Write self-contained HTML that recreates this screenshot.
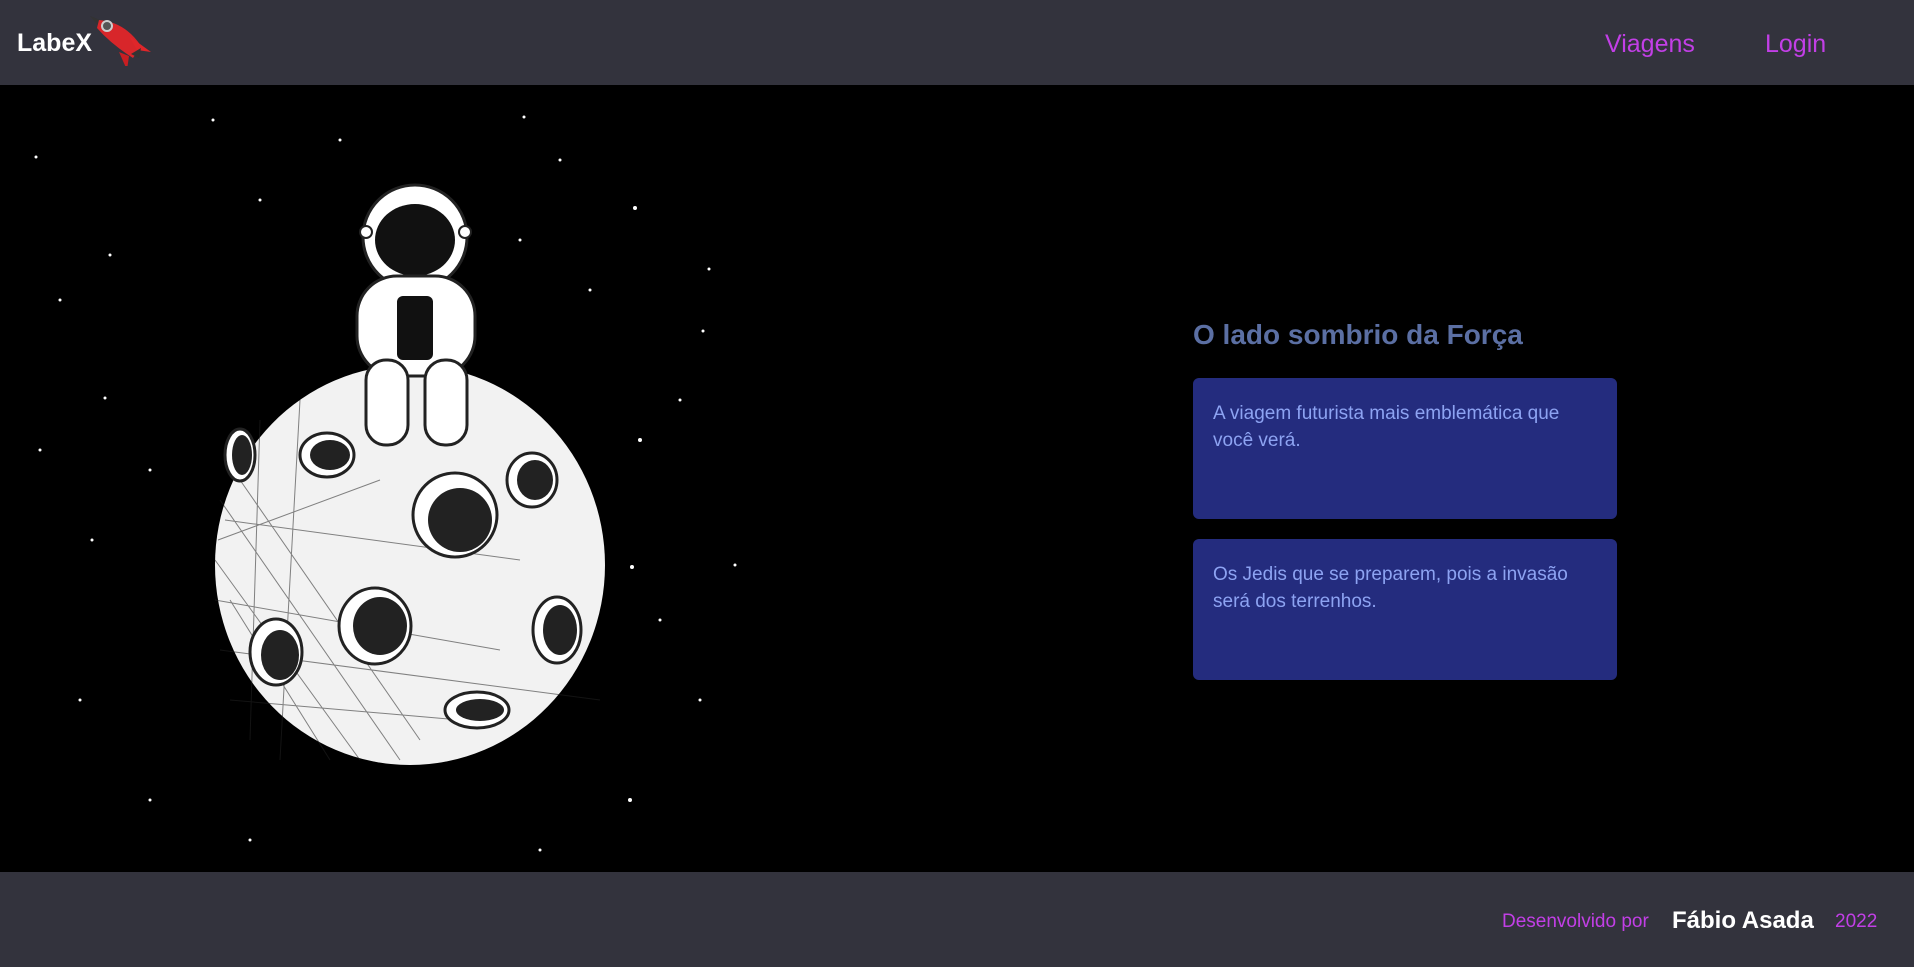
<!DOCTYPE html>
<html><head><meta charset="utf-8"><style>
*{margin:0;padding:0;box-sizing:border-box}
body{width:1914px;height:967px;background:#000;font-family:"Liberation Sans",sans-serif;position:relative;overflow:hidden}
header{position:absolute;left:0;top:0;width:1914px;height:85px;background:#33333d}
footer{position:absolute;left:0;top:872px;width:1914px;height:95px;background:#33333d}
.logo{position:absolute;left:17px;top:29px;color:#fff;font-weight:bold;font-size:25px}
.nav{position:absolute;top:30px;color:#c23fe6;font-size:25px}
h2{position:absolute;left:1193px;top:319px;color:#5b6fa3;font-size:28px;font-weight:bold}
.card{position:absolute;left:1193px;width:424px;height:141px;background:#242c7e;border-radius:6px;padding:22px 20px;color:#8da3f2;font-size:19px;line-height:27px}
.f{position:absolute;top:909px}
</style></head><body>
<header>
<div class="logo">LabeX</div>
<svg style="position:absolute;left:85px;top:10px" width="72" height="56" viewBox="0 0 72 56">
<path d="M5 6 L30 16 L22 26 Z" fill="#333"/>
<path d="M14 10 Q40 12 56 36 L48 48 Q26 34 12 18 Z" fill="#d8262a"/>
<circle cx="22" cy="16" r="5" fill="#555" stroke="#ccc" stroke-width="2"/>
<path d="M44 26 L66 42 L52 40 Z" fill="#e0262a"/>
<path d="M34 42 L42 60 L44 46 Z" fill="#c81e22"/>
<path d="M46 44 L56 38 L54 48 Z" fill="#333"/>
</svg>
<div class="nav" style="left:1605px">Viagens</div>
<div class="nav" style="left:1765px">Login</div>
</header>
<svg style="position:absolute;left:0;top:85px" width="800" height="787" viewBox="0 85 800 787">
<g fill="#fff">
<circle cx="36" cy="157" r="1.5"/><circle cx="110" cy="255" r="1.5"/><circle cx="213" cy="120" r="1.5"/><circle cx="524" cy="117" r="1.5"/><circle cx="520" cy="240" r="1.5"/><circle cx="635" cy="208" r="2"/><circle cx="709" cy="269" r="1.5"/><circle cx="703" cy="331" r="1.5"/><circle cx="105" cy="398" r="1.5"/><circle cx="92" cy="540" r="1.5"/><circle cx="640" cy="440" r="2"/><circle cx="632" cy="567" r="2"/><circle cx="735" cy="565" r="1.5"/><circle cx="630" cy="800" r="2"/><circle cx="80" cy="700" r="1.5"/><circle cx="150" cy="800" r="1.5"/><circle cx="700" cy="700" r="1.5"/><circle cx="340" cy="140" r="1.5"/><circle cx="560" cy="160" r="1.5"/><circle cx="60" cy="300" r="1.5"/><circle cx="40" cy="450" r="1.5"/><circle cx="150" cy="470" r="1.5"/><circle cx="660" cy="620" r="1.5"/><circle cx="260" cy="200" r="1.5"/><circle cx="680" cy="400" r="1.5"/><circle cx="250" cy="840" r="1.5"/><circle cx="540" cy="850" r="1.5"/><circle cx="590" cy="290" r="1.5"/>
</g>
<ellipse cx="410" cy="565" rx="195" ry="200" fill="#f2f2f2"/>
<g stroke="#222" stroke-width="1" opacity=".55" fill="none">
<path d="M220 500 L400 760 M240 480 L420 740 M215 560 L360 760 M230 600 L330 760 M220 650 L600 700 M215 600 L500 650 M225 520 L520 560 M260 420 L250 740 M300 400 L280 760 M230 700 L460 720 M218 540 L380 480"/>
</g>
<g fill="#fff" stroke="#222" stroke-width="3">
<ellipse cx="327" cy="455" rx="27" ry="22"/><ellipse cx="532" cy="480" rx="25" ry="27"/><ellipse cx="455" cy="515" rx="42" ry="42"/><ellipse cx="375" cy="626" rx="36" ry="38"/><ellipse cx="276" cy="652" rx="26" ry="33"/><ellipse cx="557" cy="630" rx="24" ry="33"/><ellipse cx="477" cy="710" rx="32" ry="18"/><ellipse cx="240" cy="455" rx="15" ry="26"/>
</g>
<g fill="#222">
<ellipse cx="330" cy="455" rx="20" ry="15"/><ellipse cx="535" cy="480" rx="18" ry="20"/><ellipse cx="460" cy="520" rx="32" ry="32"/><ellipse cx="380" cy="626" rx="27" ry="29"/><ellipse cx="280" cy="655" rx="19" ry="25"/><ellipse cx="560" cy="630" rx="17" ry="25"/><ellipse cx="480" cy="710" rx="24" ry="11"/><ellipse cx="242" cy="455" rx="10" ry="20"/>
</g>
<circle cx="415" cy="237" r="52" fill="#fff" stroke="#222" stroke-width="3"/>
<ellipse cx="415" cy="240" rx="40" ry="36" fill="#111"/>
<circle cx="366" cy="232" r="6" fill="#fff" stroke="#222" stroke-width="2"/>
<circle cx="465" cy="232" r="6" fill="#fff" stroke="#222" stroke-width="2"/>
<rect x="357" y="276" width="118" height="100" rx="40" fill="#fff" stroke="#222" stroke-width="3"/>
<rect x="397" y="296" width="36" height="64" rx="6" fill="#111"/>
<rect x="366" y="360" width="42" height="85" rx="20" fill="#fff" stroke="#222" stroke-width="3"/>
<rect x="425" y="360" width="42" height="85" rx="20" fill="#fff" stroke="#222" stroke-width="3"/>
</svg>
<h2>O lado sombrio da Força</h2>
<div class="card" style="top:378px">A viagem futurista mais emblemática que você verá.</div>
<div class="card" style="top:539px">Os Jedis que se preparem, pois a invasão será dos terrenhos.</div>
<footer></footer>
<div class="f" style="left:1502px;color:#c23fe6;font-size:19px;top:911px">Desenvolvido por</div>
<div class="f" style="left:1672px;color:#fff;font-size:24px;font-weight:bold;top:907px">Fábio Asada</div>
<div class="f" style="left:1835px;color:#c23fe6;font-size:19px;top:911px">2022</div>
</body></html>
